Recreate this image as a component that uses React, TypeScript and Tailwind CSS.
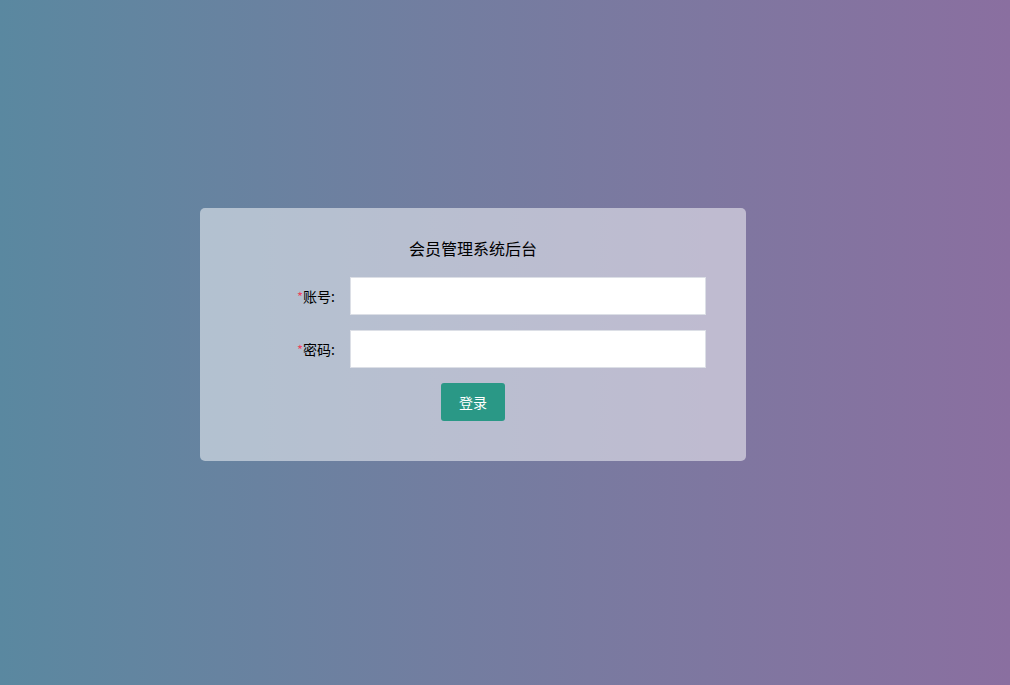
import React from "react";

export default function App() {
  return (
    <div
      className="w-[1010px] h-[685px] pt-[208px] pl-[200px] bg-gradient-to-r from-[#5a88a0] to-[#8a6fa0]"
      style={{ fontFamily: '"Noto Sans CJK SC", "Noto Sans", sans-serif' }}
    >
      <div className="w-[546px] h-[253px] rounded-[5px] bg-white/50 pl-[40px] pr-[40px] pt-[29px]">
        <div className="text-center text-[16px] leading-[22px] text-black">会员管理系统后台</div>
        <div className="mt-[18px] flex items-center h-[38px]">
          <label className="w-[95px] text-right text-[14px] text-black mr-[15px]">
            <span className="text-[#f0455f] text-[13px]">*</span>账号:
          </label>
          <input className="flex-1 h-[38px] bg-white border border-[#dcdfe6] outline-none px-2 text-[14px]" />
        </div>
        <div className="mt-[15px] flex items-center h-[38px]">
          <label className="w-[95px] text-right text-[14px] text-black mr-[15px]">
            <span className="text-[#f0455f] text-[13px]">*</span>密码:
          </label>
          <input type="password" className="flex-1 h-[38px] bg-white border border-[#dcdfe6] outline-none px-2 text-[14px]" />
        </div>
        <div className="mt-[15px] flex justify-center">
          <button className="w-[64px] h-[38px] bg-[#2a9886] text-white text-[14px] rounded-[3px]">登录</button>
        </div>
      </div>
    </div>
  );
}
